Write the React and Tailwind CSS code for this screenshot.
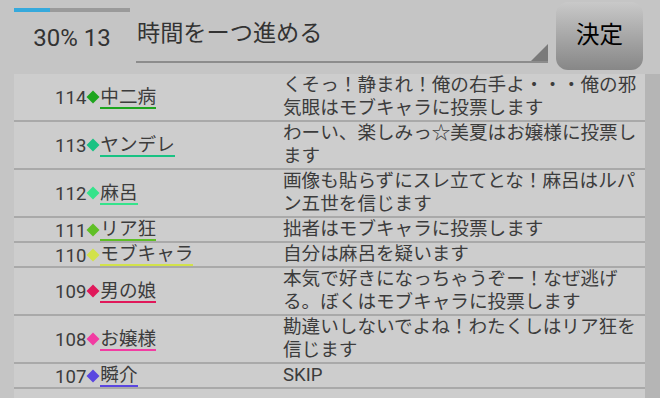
import React from 'react';

const rows = [
  { no: 114, name: '中二病', color: '#1ea51e', lines: ['くそっ！静まれ！俺の右手よ・・・俺の邪', '気眼はモブキャラに投票します'] },
  { no: 113, name: 'ヤンデレ', color: '#19c283', lines: ['わーい、楽しみっ☆美夏はお嬢様に投票し', 'ます'] },
  { no: 112, name: '麻呂', color: '#35e38b', lines: ['画像も貼らずにスレ立てとな！麻呂はルパ', 'ン五世を信じます'] },
  { no: 111, name: 'リア狂', color: '#5fbf26', lines: ['拙者はモブキャラに投票します'] },
  { no: 110, name: 'モブキャラ', color: '#d2e24a', lines: ['自分は麻呂を疑います'] },
  { no: 109, name: '男の娘', color: '#e0185a', lines: ['本気で好きになっちゃうぞー！なぜ逃げ', 'る。ぼくはモブキャラに投票します'] },
  { no: 108, name: 'お嬢様', color: '#f23ca2', lines: ['勘違いしないでよね！わたくしはリア狂を', '信じます'] },
  { no: 107, name: '瞬介', color: '#5a46e0', lines: ['SKIP'] },
];

const Diamond = ({ color }) => (
  <svg width="14" height="14" viewBox="0 0 14 14" className="shrink-0">
    <polygon points="7,0.5 13.5,7 7,13.5 0.5,7" fill={color} />
  </svg>
);

const Row = ({ row }) => (
  <div className="flex border-b-2 border-[#a9a9a9]">
    <div className="w-[269px] shrink-0 flex items-center pl-[41px] text-[18.6px] text-[#3c3c3c]">
      <span className="leading-[20px] pt-[2px]">{row.no}</span>
      <Diamond color={row.color} />
      <span className="leading-[20px] pt-[1px] border-b-2" style={{ borderColor: row.color }}>
        {row.name}
      </span>
    </div>
    <div className="flex-1 text-[18.6px] leading-[23px] text-[#3c3c3c] whitespace-nowrap">
      {row.lines.map((l, i) => (
        <div key={i}>{l}</div>
      ))}
    </div>
  </div>
);

export default function App() {
  return (
    <div
      className="w-[660px] h-[398px] overflow-hidden bg-[#c5c5c5] flex flex-col"
      style={{ fontFamily: 'Roboto, "Noto Sans CJK JP", sans-serif' }}
    >
      <div className="h-[74px] shrink-0 flex">
        <div className="ml-[14px] w-[116px] shrink-0 flex flex-col">
          <div className="mt-[8px] h-[4px] bg-[#9a9a9a] flex">
            <div className="w-[36px] bg-[#35a9dc]" />
          </div>
          <div className="mt-[12px] text-center text-[24px] leading-[28px] text-[#333]">30% 13</div>
        </div>
        <div className="ml-[6px] w-[412px] shrink-0 h-[63px] flex items-start border-b-2 border-[#8c8c8c] relative">
          <span className="mt-[19px] pl-[1px] text-[23.2px] leading-[28px] text-[#333]">時間をーつ進める</span>
          <svg width="17" height="17" viewBox="0 0 17 17" className="absolute right-0 bottom-0">
            <polygon points="0,17 17,0 17,17" fill="#7a7a7a" />
          </svg>
        </div>
        <div className="ml-[8px] mt-[2px] w-[87px] h-[68px] rounded-[12px] bg-gradient-to-b from-[#c9c9c9] to-[#878787] flex items-center justify-center text-[23.5px] text-black">
          決定
        </div>
      </div>
      <div className="flex-1 flex min-h-0">
        <div className="w-[14px] shrink-0" />
        <div className="flex-1 bg-[#cdcdcd] flex flex-col">
          {rows.map((r) => (
            <Row key={r.no} row={r} />
          ))}
          <div className="h-[26px]" />
        </div>
        <div className="w-[15px] shrink-0 bg-[#b5b5b5]" />
      </div>
    </div>
  );
}
